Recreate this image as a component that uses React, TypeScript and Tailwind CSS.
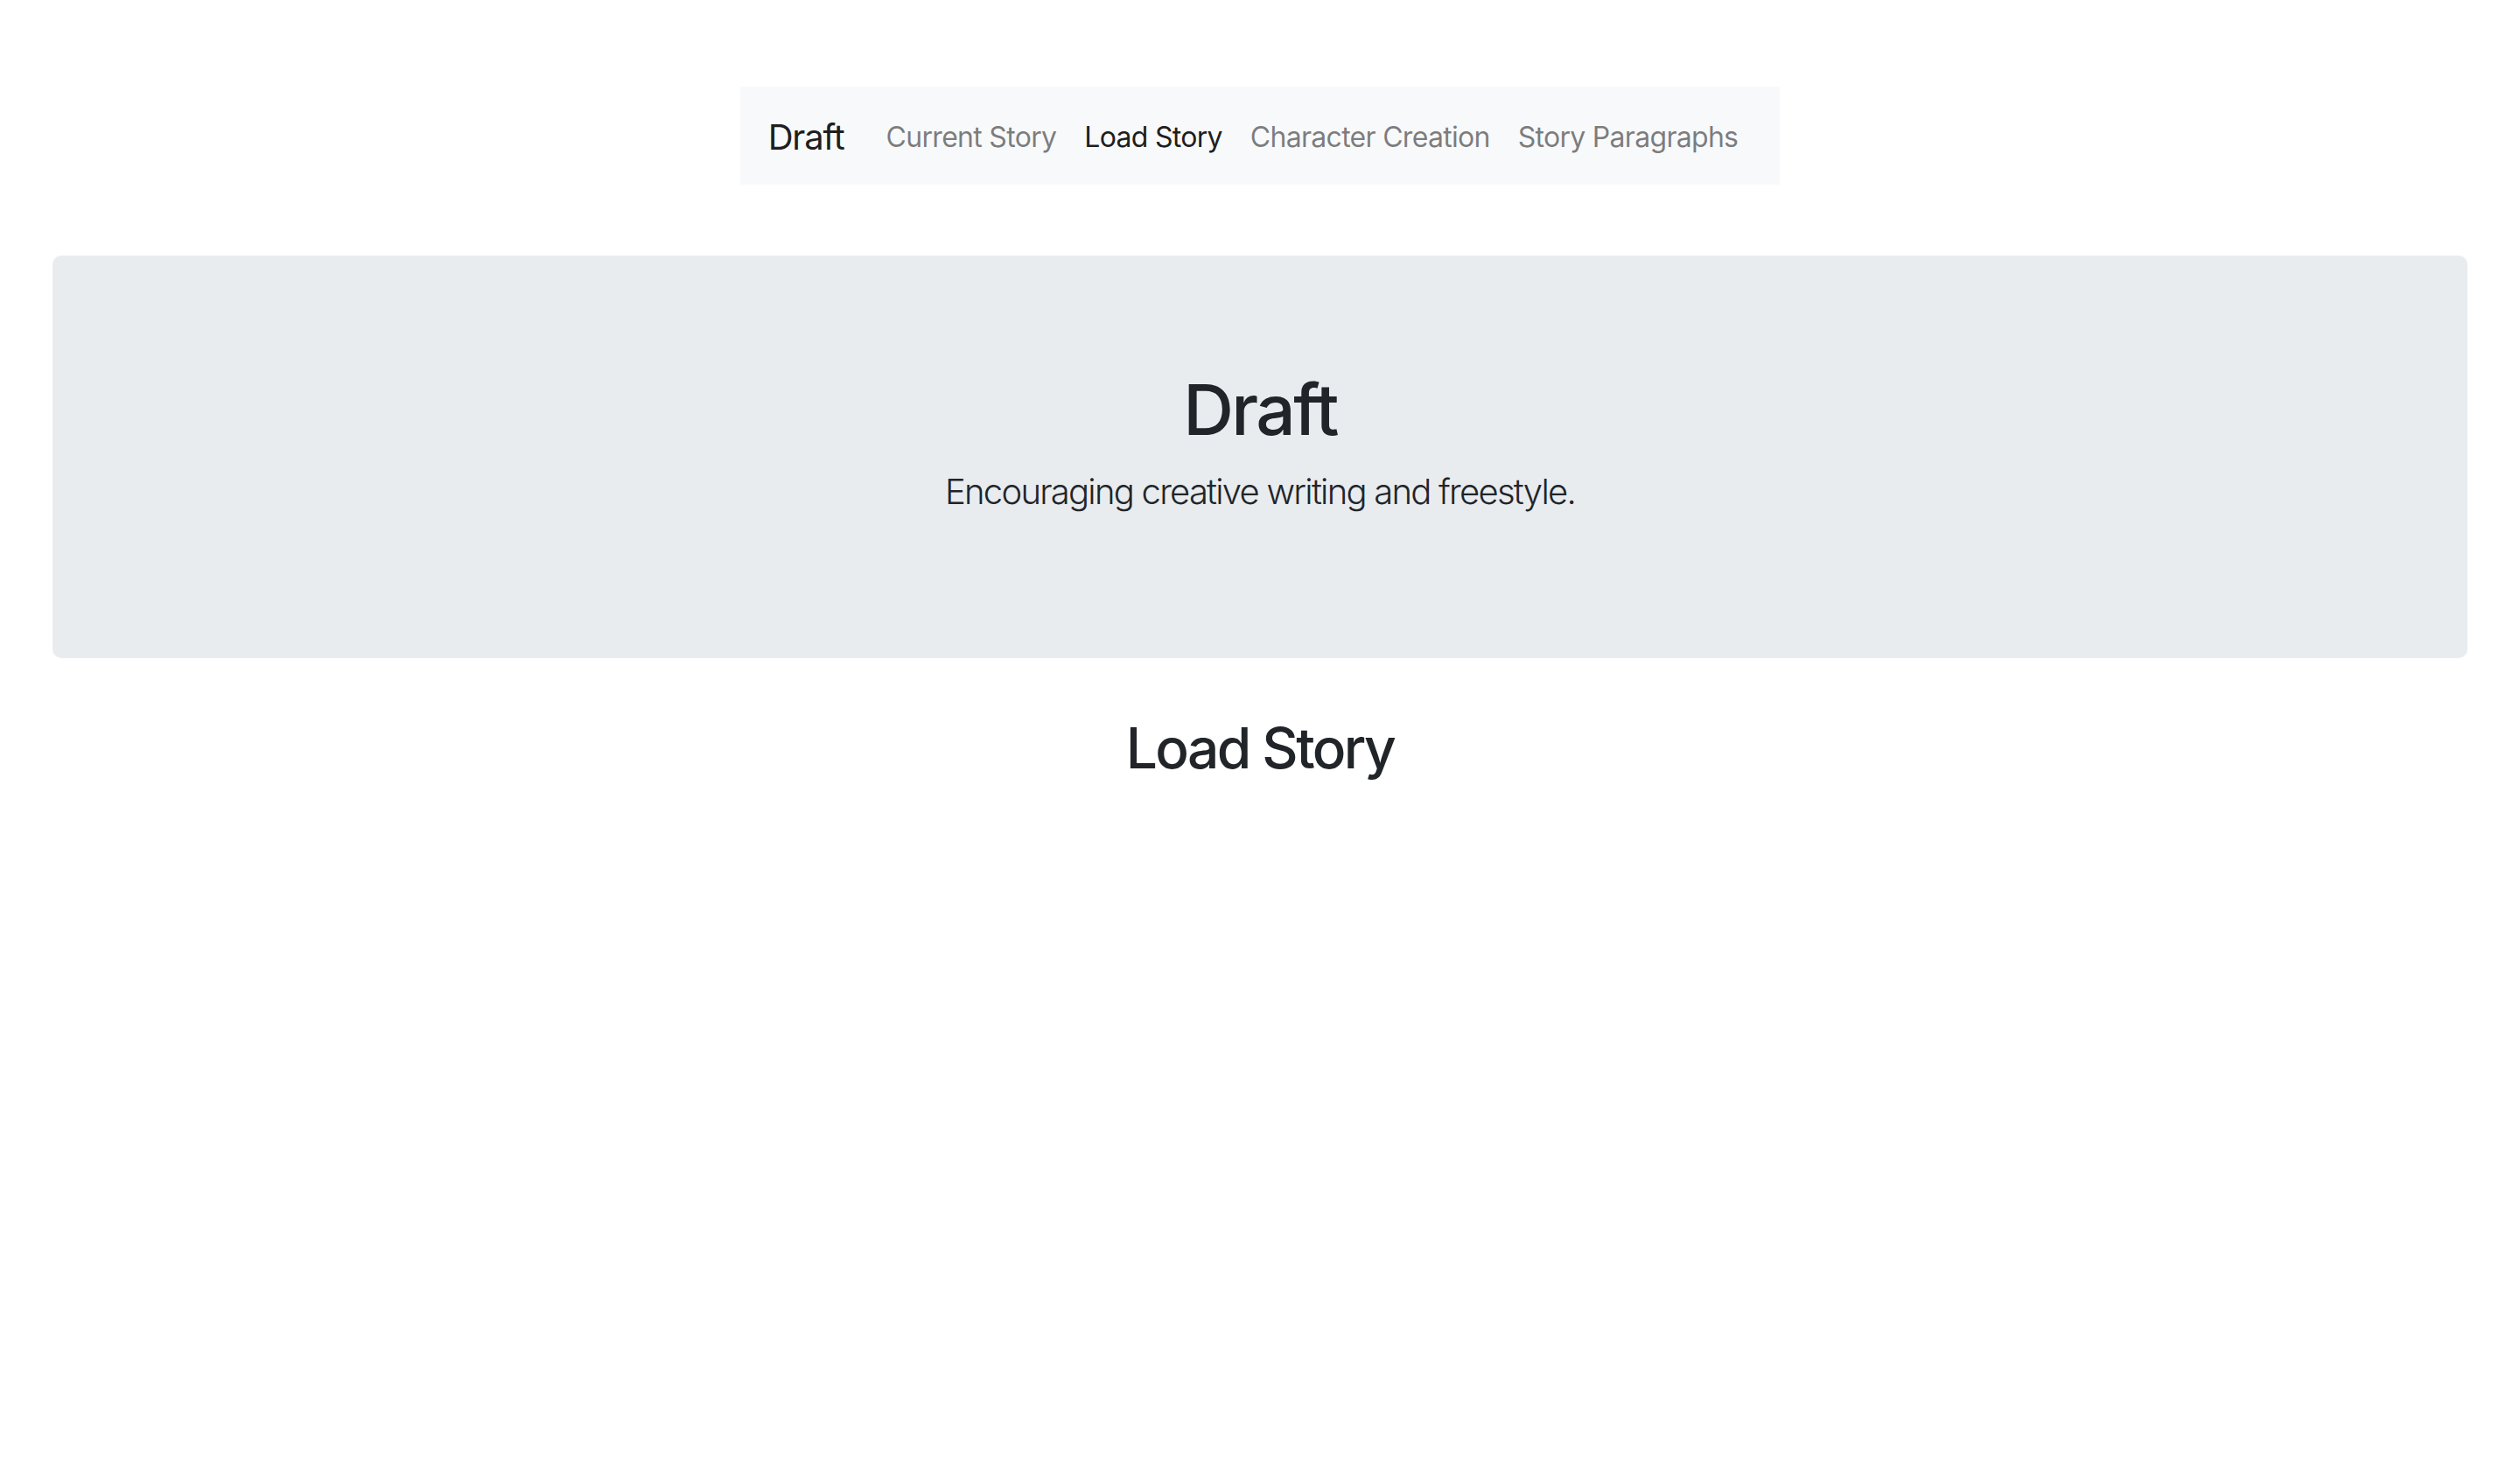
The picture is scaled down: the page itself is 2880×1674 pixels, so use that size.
const links = [
  { label: 'Current Story', active: false },
  { label: 'Load Story', active: true },
  { label: 'Character Creation', active: false },
  { label: 'Story Paragraphs', active: false },
];

export default function App() {
  return (
    <div className="min-h-screen bg-white text-[#212529] font-['Inter','Noto_Sans',sans-serif]">
      <div className="flex justify-center pt-[99px]">
        <nav className="flex items-center bg-[#f8f9fa] px-[32px] pt-[18px] pb-[14px]">
          <a className="mr-[32px] py-[10px] text-[40px] leading-[60px] tracking-[-0.03em] text-black/90">Draft</a>
          <ul className="flex items-center">
            {links.map((link) => (
              <li key={link.label}>
                <a
                  className={`block px-[16px] py-[16px] text-[32px] leading-[48px] tracking-[-0.022em] ${
                    link.active ? 'text-black/90' : 'text-black/50'
                  }`}
                >
                  {link.label}
                </a>
              </li>
            ))}
          </ul>
        </nav>
      </div>

      <div className="mx-[60px] mt-[81px] mb-[64px] rounded-[10px] bg-[#e9ecef] px-[64px] py-[128px] text-center">
        <h1 className="mb-[16px] text-[80px] font-medium leading-[96px] tracking-[-0.032em]">Draft</h1>
        <p className="mb-[32px] text-[40px] font-light leading-[60px] tracking-[-0.044em]">
          Encouraging creative writing and freestyle.
        </p>
      </div>

      <h2 className="text-center text-[64px] font-medium leading-[77px] tracking-[-0.04em]">Load Story</h2>
    </div>
  );
}
